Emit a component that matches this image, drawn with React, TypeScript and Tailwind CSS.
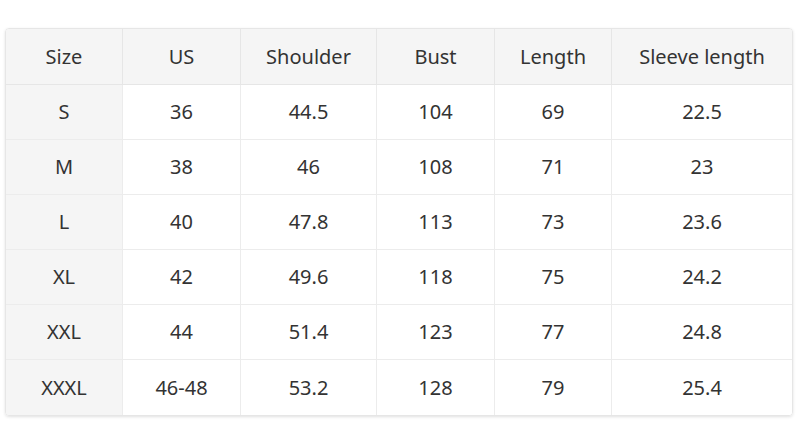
const headers = ["Size", "US", "Shoulder", "Bust", "Length", "Sleeve length"];

const rows = [
    ["S", "36", "44.5", "104", "69", "22.5"],
    ["M", "38", "46", "108", "71", "23"],
    ["L", "40", "47.8", "113", "73", "23.6"],
    ["XL", "42", "49.6", "118", "75", "24.2"],
    ["XXL", "44", "51.4", "123", "77", "24.8"],
    ["XXXL", "46-48", "53.2", "128", "79", "25.4"],
];

export default function App() {
    return (
        <div className="w-[800px] h-[443px] bg-white pt-[28px] pl-[5px] font-['Noto_Sans',sans-serif] text-[#333333]">
            <div className="w-[788px] rounded-[4px] border border-[#e6e6e6] shadow-[0_1px_3px_rgba(0,0,0,0.12)] overflow-hidden">
                <div className="grid grid-cols-[117px_118px_136px_118px_117px_1fr] h-[56px] bg-[#f5f5f5] border-b border-[#e6e6e6]">
                    {headers.map((h, i) => (
                        <div key={h} className={`flex items-center justify-center text-[20px] ${i < 5 ? "border-r border-[#e6e6e6]" : ""}`}>
                            {h}
                        </div>
                    ))}
                </div>
                {rows.map((row, r) => (
                    <div key={row[0]} className={`grid grid-cols-[117px_118px_136px_118px_117px_1fr] h-[55px] ${r < rows.length - 1 ? "border-b border-[#ececec]" : ""}`}>
                        {row.map((cell, i) => (
                            <div key={i} className={`flex items-center justify-center text-[20px] ${i === 0 ? "bg-[#f5f5f5]" : "bg-white"} ${i < 5 ? "border-r border-[#ececec]" : ""}`}>
                                {cell}
                            </div>
                        ))}
                    </div>
                ))}
            </div>
        </div>
    );
}
